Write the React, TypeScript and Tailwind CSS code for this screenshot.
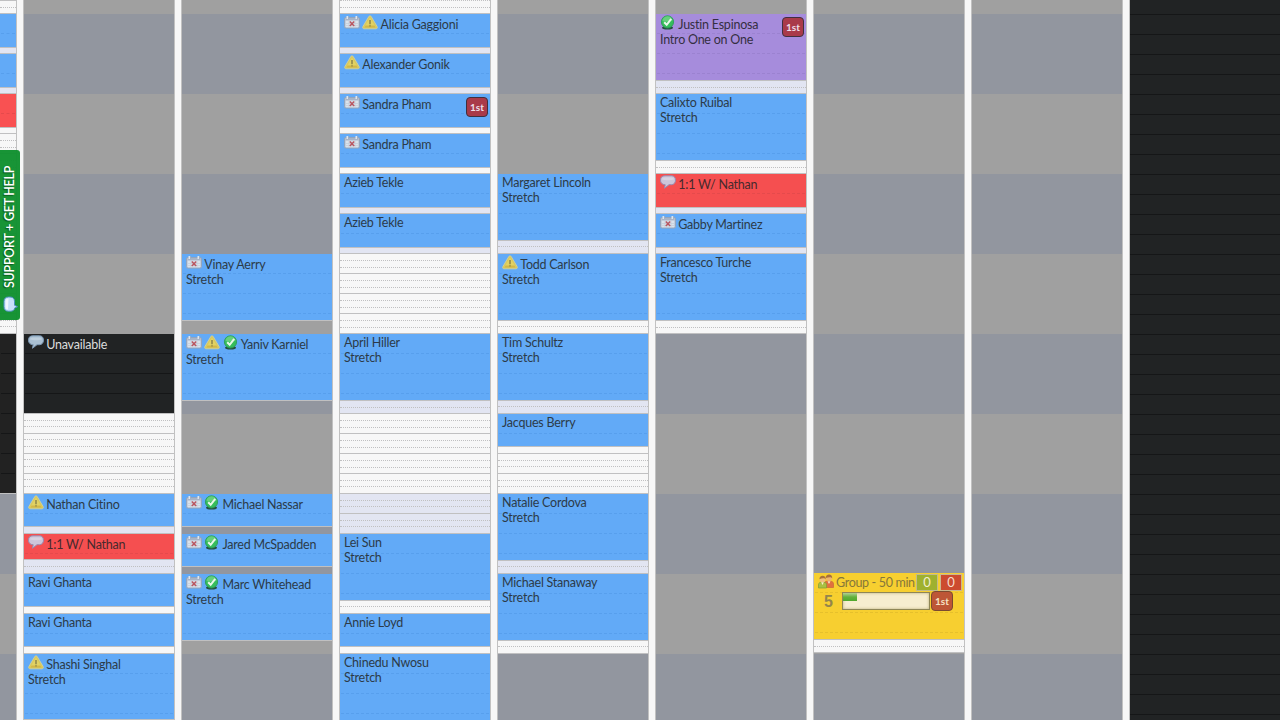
import React from "react";

type IconName = "cal" | "warn" | "check" | "chat";

type EventInfo = {
  title: string;
  sub?: string;
  icons?: IconName[];
  tone?: "blue" | "red" | "purple" | "black";
  first?: boolean;
};

type Segment =
  | { kind: "closed"; to: number }
  | { kind: "rows"; to: number; lav?: boolean; solid: number[]; dotted: number[] }
  | { kind: "event"; to: number; event: EventInfo }
  | { kind: "dark"; to: number }
  | { kind: "plain"; to: number; tone: "blue" | "red" }
  | { kind: "group"; to: number };

const closed = (to: number): Segment => ({ kind: "closed", to });
const open = (to: number, solid: number[], dotted: number[] = []): Segment => ({ kind: "rows", to, solid, dotted });
const hold = (to: number, solid: number[], dotted: number[] = []): Segment => ({ kind: "rows", to, lav: true, solid, dotted });
const ev = (to: number, title: string, sub?: string, icons?: IconName[], extra?: Partial<EventInfo>): Segment => ({
  kind: "event",
  to,
  event: { title, sub, icons, ...extra },
});

function CalIcon() {
  return (
    <svg width="16" height="15" viewBox="0 0 16 15" className="block">
      <rect x="0.5" y="2.5" width="15" height="10.6" rx="1.5" fill="#c3cedd" stroke="#93a5bd" />
      <rect x="1.5" y="3" width="13" height="2.6" fill="#a9b4c6" />
      <rect x="2" y="5.6" width="12" height="6.6" fill="#dbe2ea" />
      <path d="M5 6v6M8 6v6M11 6v6M2 8.5h12M2 10.5h12" stroke="#c0cad7" strokeWidth="0.6" />
      <path d="M3.5 1v3M12.5 1v3" stroke="#dce5ef" strokeWidth="2" />
      <path d="M4.5 1v3M13.5 1v3" stroke="#8d9fb8" strokeWidth="0.6" />
      <path d="M5.8 6.5l4.400 4.600M10.200 6.500l-4.400 4.600" stroke="#b95661" strokeWidth="1.5" />
    </svg>
  );
}

function WarnIcon() {
  return (
    <svg width="16" height="15" viewBox="0 0 16 15" className="block">
      <path d="M8 .8c.7 0 1 .4 1.3.9l5.8 9.8c.6 1.2.1 2.3-1.2 2.3H2.1C.8 13.8.3 12.700.9 11.500L6.700 1.700C7 1.200 7.300.8 8 .8z" fill="#d9c95b" stroke="#cfd0a0" strokeWidth="0.9" />
      <path d="M8 2.500L13.500 12H2.500z" fill="#e2d263" />
      <path d="M3.500 10.500h9l1 2h-11z" fill="#d2b748" />
      <path d="M8 5v4.300" stroke="#918a4c" strokeWidth="1.600" />
      <path d="M8 10.200v1.300" stroke="#918a4c" strokeWidth="1.600" />
    </svg>
  );
}

function CheckIcon() {
  return (
    <svg width="16" height="15" viewBox="0 0 16 15" className="block">
      <ellipse cx="7.500" cy="12.700" rx="5.500" ry="1.800" fill="#24503f" />
      <circle cx="7.500" cy="6.900" r="6.100" fill="#36bd5c" stroke="#2b9c59" strokeWidth="0.9" />
      <path d="M2.500 6a5 4.500 0 0 1 10-.5c-3 1.500-7 1.500-10 .5z" fill="#66cf7d" />
      <path d="M4.200 7.200l2.500 2.600 4.500-6" fill="none" stroke="#e8f8ea" strokeWidth="2" />
    </svg>
  );
}

function ChatIcon({ tone }: { tone?: string }) {
  const fill = tone === "red" ? "#cdc5d9" : tone === "black" ? "#a9bfd2" : "#d6e8fa";
  const edge = tone === "red" ? "#998bb0" : tone === "black" ? "#7d99b5" : "#a8cbee";
  return (
    <svg width="16" height="15" viewBox="0 0 16 15" className="block">
      <path
        d="M5 .8h6.500c2.500 0 4 1.700 4 4.300s-1.500 4.600-4 4.600H9L4.500 13.300 5.200 9.700C2 9.700.5 7.900.5 5.100S2 .8 5 .8z"
        fill={fill}
        stroke={edge}
      />
      <path d="M4.500 2.500h7c1.500 0 2.300.8 2.500 2-3 1-9 1-12 0 .2-1.200 1-2 2.500-2z" fill="#fff" opacity="0.25" />
    </svg>
  );
}

function PeopleIcon() {
  return (
    <svg width="16" height="15" viewBox="0 0 16 15" className="block">
      <path d="M6.500 13.500V9.200C6.500 7.800 8 7 10.800 7s4.700.8 4.700 2.700v3.800z" fill="#e0703f" stroke="#c8653a" strokeWidth="0.7" />
      <circle cx="11" cy="4.100" r="3" fill="#eeb66f" />
      <path d="M7.800 4C7.600 1.600 9 .4 11 .4S14.500 1.600 14.200 4.500C13.500 2.500 10 3.200 7.800 4z" fill="#a9703c" />
      <path d="M9.500 7.300l1.500 2.700 1.500-2.700z" fill="#f7dfc0" />
      <path d="M.5 14V10.500C.5 9 2 8 4.500 8s4 1 4 2.500V14z" fill="#a9c043" stroke="#7f9c35" strokeWidth="0.7" />
      <circle cx="4.600" cy="5.400" r="2.900" fill="#f0bf7e" />
      <path d="M1.500 5.300C1.300 3 2.700 1.800 4.600 1.800S8 3 7.700 5.500C7 3.800 3.500 4.200 1.500 5.300z" fill="#a9723a" />
      <path d="M3.200 8.200l1.300 2.800 1.300-2.800z" fill="#f9ecc8" />
    </svg>
  );
}

function Icon({ name, tone }: { name: IconName; tone?: string }) {
  if (name === "cal") return <CalIcon />;
  if (name === "warn") return <WarnIcon />;
  if (name === "check") return <CheckIcon />;
  return <ChatIcon tone={tone} />;
}

const toneClass = {
  blue: "bg-[#62aaf7] text-[#2c3b49]",
  red: "bg-[#f54f50] text-[#472a2d]",
  purple: "bg-[#a68cdc] text-[#352f42]",
  black: "bg-[#212324] text-[#dcdcdc]",
};
const dashClass = {
  blue: "border-dashed border-[#579fed]",
  red: "border-dashed border-[#e54a4c]",
  purple: "border-dashed border-[#9b82d0]",
  black: "border-solid border-[#151617]",
  yellow: "border-dashed border-[#e6c02c]",
};

function Dashes({ height, tone }: { height: number; tone: keyof typeof dashClass }) {
  const count = Math.ceil(height / 20);
  return (
    <div className="absolute inset-x-px top-0 h-full overflow-hidden">
      {Array.from({ length: count }, (_, i) => (
        <div key={i} className={`h-5 border-b ${dashClass[tone]}`} />
      ))}
    </div>
  );
}

function EventBlock({ event, height }: { event: EventInfo; height: number }) {
  const tone = event.tone ?? "blue";
  return (
    <div className={`relative shrink-0 overflow-hidden ${toneClass[tone]}`} style={{ height }}>
      <Dashes height={height} tone={tone} />
      <div className="relative pt-px pl-1 text-[12.5px] leading-[15px] tracking-[-0.23px] whitespace-nowrap [font-variant-ligatures:none]">
        {event.icons ? (
          <div className="flex h-[17px] gap-[2.25px]">
            {event.icons.map((n) => (
              <Icon key={n} name={n} tone={tone} />
            ))}
            <span className="pt-[2px]">{event.title}</span>
          </div>
        ) : (
          <div>{event.title}</div>
        )}
        {event.sub && <div>{event.sub}</div>}
      </div>
      {event.first && (
        <div className="absolute top-[3px] right-[2px] flex h-5 w-[22px] items-center justify-center rounded-[4px] border border-[#40303f] bg-[#a93a49] text-[10px] leading-none font-bold text-[#eedfe8]">
          1st
        </div>
      )}
    </div>
  );
}

function GroupBlock({ height }: { height: number }) {
  return (
    <div className="relative shrink-0 overflow-hidden bg-[#f7cf30] text-[#86773a]" style={{ height }}>
      <Dashes height={height} tone="yellow" />
      <div className="relative pl-1">
        <div className="flex h-[18px] pt-px">
          <PeopleIcon />
          <span className="w-[79px] pt-px pl-[2px] text-[12.5px] leading-[15px] tracking-[-0.33px] whitespace-nowrap">Group - 50 min</span>
          <div className="ml-[3px] flex gap-[2px]">
            <span className="h-[17px] w-[22px] border border-[#c2bb8b] bg-[#9fb12f] text-center text-[13px] leading-[15px] text-[#f5efcf]">0</span>
            <span className="h-[17px] w-[22px] border border-[#cbb78d] bg-[#cc4b2f] text-center text-[13px] leading-[15px] text-[#f8ddcb]">0</span>
          </div>
        </div>
        <div className="flex">
          <span className="w-[24px] pt-[2px] pl-[6px] font-['Liberation_Sans',sans-serif] text-[16px] leading-[18px] font-bold text-[#94854c]">5</span>
          <div className="mt-px h-[18px] w-[88px] border border-[#8f8656] bg-[#f6edcf] shadow-[inset_0_0_3px_#b9ac78]">
            <div className="h-2 w-[14px] bg-linear-to-b from-[#b0cf92] via-[#62b13b] to-[#4fa82d]" />
          </div>
          <span className="ml-px flex h-5 w-[22px] items-center justify-center rounded-[4px] border border-[#7b4a30] bg-[#bd5636] text-[10px] leading-none font-bold text-[#f6e3c4]">
            1st
          </span>
        </div>
      </div>
    </div>
  );
}

/* Closed hours alternate between two tones every 80px, switching at y = 14. */
function ClosedBlock({ from, to }: { from: number; to: number }) {
  const parts: { h: number; cool: boolean }[] = [];
  let y = from;
  while (y < to) {
    const index = Math.floor((y + 66) / 80);
    const next = Math.min(to, index * 80 + 14);
    parts.push({ h: next - y, cool: index % 2 === 1 });
    y = next;
  }
  return (
    <>
      {parts.map((p, i) => (
        <div key={i} className={`shrink-0 ${p.cool ? "bg-[#92969f]" : "bg-[#a0a0a0]"}`} style={{ height: p.h }} />
      ))}
    </>
  );
}

function OpenRows({ from, seg }: { from: number; seg: Extract<Segment, { kind: "rows" }> }) {
  const marks = [...seg.solid.map((y) => ({ y, dotted: false })), ...seg.dotted.map((y) => ({ y, dotted: true }))].sort((a, b) => a.y - b.y);
  let prev = from;
  return (
    <>
      {marks.map((m) => {
        const h = m.y + 1 - prev;
        prev = m.y + 1;
        return (
          <div
            key={m.y}
            className={`shrink-0 border-b border-[#c0c0c1] ${m.dotted ? "border-dotted" : "border-solid"} ${seg.lav ? "bg-[#e2e5f2]" : "bg-[#f7f7f7]"}`}
            style={{ height: h }}
          />
        );
      })}
    </>
  );
}

function Column({ segments, className }: { segments: Segment[]; className: string }) {
  let y = 0;
  return (
    <div className={`flex h-[720px] shrink-0 flex-col overflow-hidden border-[#c1c1c1] ${className}`}>
      {segments.map((s, i) => {
        const from = y;
        y = s.to;
        const height = s.to - from;
        if (s.kind === "closed") return <ClosedBlock key={i} from={from} to={s.to} />;
        if (s.kind === "rows") return <OpenRows key={i} from={from} seg={s} />;
        if (s.kind === "event") return <EventBlock key={i} event={s.event} height={height} />;
        if (s.kind === "group") return <GroupBlock key={i} height={height} />;
        return (
          <div
            key={i}
            className={`relative shrink-0 ${s.kind === "dark" ? "bg-[#222222]" : s.tone === "red" ? "bg-[#f95152]" : "bg-[#62aaf7]"}`}
            style={{ height }}
          >
            <Dashes height={height} tone={s.kind === "dark" ? "black" : s.tone} />
          </div>
        );
      })}
    </div>
  );
}

const columns: Segment[][] = [
  [
    closed(334),
    ev(413, "Unavailable", undefined, ["chat"], { tone: "black" }),
    open(494, [413, 433, 453, 473, 493], [420, 426, 439, 446, 459, 466, 479, 486]),
    ev(526, "Nathan Citino", undefined, ["warn"]),
    hold(534, [526, 533]),
    ev(559, "1:1 W/ Nathan", undefined, ["chat"], { tone: "red" }),
    hold(574, [559, 573], [566]),
    ev(606, "Ravi Ghanta"),
    open(614, [606, 613]),
    ev(646, "Ravi Ghanta"),
    open(654, [646, 653]),
    ev(719, "Shashi Singhal", "Stretch", ["warn"]),
    open(720, [719]),
  ],
  [
    closed(254),
    ev(320, "Vinay Aerry", "Stretch", ["cal"]),
    open(321, [320]),
    closed(334),
    ev(400, "Yaniv Karniel", "Stretch", ["cal", "warn", "check"]),
    open(401, [400]),
    closed(494),
    ev(526, "Michael Nassar", undefined, ["cal", "check"]),
    open(527, [526]),
    closed(534),
    ev(566, "Jared McSpadden", undefined, ["cal", "check"]),
    open(567, [566]),
    closed(574),
    ev(640, "Marc Whitehead", "Stretch", ["cal", "check"]),
    open(641, [640]),
    closed(720),
  ],
  [
    open(14, [13], [0, 7]),
    ev(47, "Alicia Gaggioni", undefined, ["cal", "warn"]),
    hold(54, [47, 53]),
    ev(87, "Alexander Gonik", undefined, ["warn"]),
    hold(94, [87, 93]),
    ev(127, "Sandra Pham", undefined, ["cal"], { first: true }),
    open(134, [127, 133]),
    ev(167, "Sandra Pham", undefined, ["cal"]),
    open(174, [167, 173]),
    ev(207, "Azieb Tekle"),
    hold(214, [207, 213]),
    ev(247, "Azieb Tekle"),
    hold(254, [247, 253]),
    open(334, [273, 293, 313, 333], [260, 267, 280, 287, 300, 307, 320, 327]),
    ev(400, "April Hiller", "Stretch"),
    hold(414, [400, 413], [407]),
    open(494, [433, 453, 473, 493], [420, 427, 440, 447, 460, 467, 480, 486]),
    hold(534, [513, 533], [500, 506, 520, 526]),
    ev(600, "Lei Sun", "Stretch"),
    open(614, [600, 613], [606]),
    ev(646, "Annie Loyd"),
    open(654, [646, 653]),
    ev(720, "Chinedu Nwosu", "Stretch"),
  ],
  [
    closed(174),
    ev(240, "Margaret Lincoln", "Stretch"),
    hold(254, [240, 253], [246]),
    ev(320, "Todd Carlson", "Stretch", ["warn"]),
    open(334, [320, 333], [326]),
    ev(400, "Tim Schultz", "Stretch"),
    hold(414, [400, 413], [406]),
    ev(446, "Jacques Berry"),
    open(494, [446, 453, 473, 493], [460, 466, 480, 486]),
    ev(560, "Natalie Cordova", "Stretch"),
    hold(574, [560, 573], [566]),
    ev(640, "Michael Stanaway", "Stretch"),
    open(654, [640, 653], [646]),
    closed(720),
  ],
  [
    closed(14),
    ev(80, "Justin Espinosa", "Intro One on One", ["check"], { tone: "purple", first: true }),
    hold(94, [80, 93], [87]),
    ev(160, "Calixto Ruibal", "Stretch"),
    open(174, [160, 173], [167]),
    ev(207, "1:1 W/ Nathan", undefined, ["chat"], { tone: "red" }),
    hold(214, [207, 213]),
    ev(247, "Gabby Martinez", undefined, ["cal"]),
    hold(254, [247, 253]),
    ev(320, "Francesco Turche", "Stretch"),
    open(334, [320, 333], [327]),
    closed(720),
  ],
  [closed(573), { kind: "group", to: 639 }, open(653, [639, 652], [646]), closed(720)],
  [closed(720)],
];

const firstColumn: Segment[] = [
  open(14, [0, 13], [7]),
  { kind: "plain", to: 47, tone: "blue" },
  hold(54, [47, 53]),
  { kind: "plain", to: 87, tone: "blue" },
  hold(94, [87, 93]),
  { kind: "plain", to: 127, tone: "red" },
  open(334, [127, 133, 153, 173, 193, 213, 233, 253, 273, 293, 313, 333], [140, 147, 160, 167, 180, 187, 200, 207, 220, 227, 240, 247, 260, 267, 280, 287, 300, 307, 320, 326]),
  { kind: "dark", to: 493 },
  open(494, [493]),
  closed(720),
];

export default function App() {
  return (
    <div className="relative flex h-[720px] w-[1280px] overflow-hidden bg-[#f7f7f7] font-['Lato',sans-serif]">
      <Column segments={firstColumn} className="w-[17px] border-r" />
      <div className="flex gap-[6px] pl-[6px]">
        {columns.map((segments, i) => (
          <Column key={i} segments={segments} className="w-[152px] border-x" />
        ))}
      </div>
      <div className="ml-[6px] flex h-[720px] flex-1 flex-col overflow-hidden border-l border-[#c1c1c1]">
        <div className="h-[15px] shrink-0 border-b border-[#151617] bg-[#212324]" />
        {Array.from({ length: 36 }, (_, i) => (
          <div key={i} className="h-5 shrink-0 border-b border-[#151617] bg-[#212324]" />
        ))}
      </div>
      <div className="absolute top-[150px] left-0 flex h-[170px] w-5 flex-col items-center rounded-r-[3px] bg-[#119130]/97 pt-[15px]">
        <div className="h-[123px] rotate-180 text-[12.5px] leading-5 font-semibold tracking-[-0.27px] whitespace-nowrap text-white [text-shadow:-1px_-1px_1px_#0a5a1c] [writing-mode:vertical-rl]">
          SUPPORT + GET HELP
        </div>
        <div className="mt-[8px] mr-[1px]">
          <svg width="16" height="16" viewBox="0 0 16 16" className="block">
            <path
              d="M6.500 1h1.500c3 0 4.500 1.500 4.500 4.500v3.700l3 1.500-2.800 1.300c-.2 2-1.700 3.200-4.200 3.200h-2c-3 0-4.500-1.600-4.500-4.500V5.500C2 2.500 3.500 1 6.500 1z"
              fill="#c7e0fa"
              stroke="#4b8ec0"
            />
            <path d="M6.500 2.500c-2 0-3 1-3 3v5c0 2 1 3 2.500 3z" fill="#eef6ff" />
          </svg>
        </div>
      </div>
    </div>
  );
}
